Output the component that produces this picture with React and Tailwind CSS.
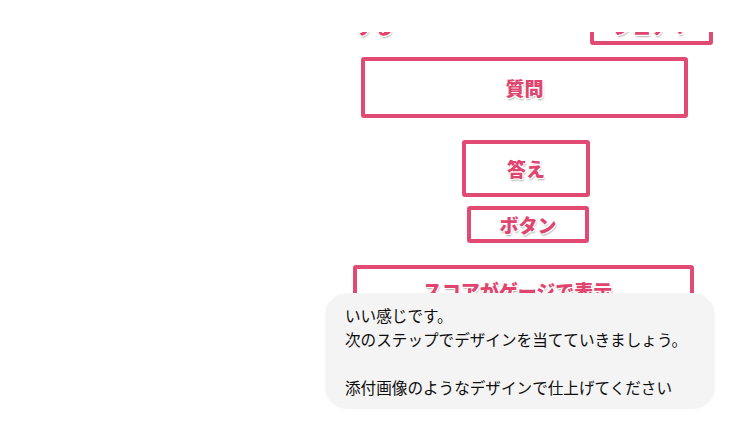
import React from 'react'

const pinkBox = 'border-[4px] border-[#e14b73] rounded-[3px] flex items-center justify-center'
const label =
  'font-black text-[19px] leading-none text-[#e0456f] [text-shadow:-1px_-1px_0_#fff,1px_-1px_0_#fff,-1px_1px_0_#fff,1px_1px_0_#fff,1px_2px_2px_rgba(0,0,0,0.35)]'

function Wireframe() {
  return (
    <div className="w-[375px] h-[261px] overflow-hidden bg-white">
      {/* shifted up so the top of the sketch is cut like the scrolled view */}
      <div className="-mt-8 flex flex-col items-start">
        <div className="mt-[5px] w-full flex items-center justify-between">
          <span className={`${label} ml-[15px]`}>する</span>
          <div className={`${pinkBox} w-[123px] h-[40px] mr-[2px]`}>
            <span className={label}>シェア！</span>
          </div>
        </div>
        <div className={`${pinkBox} mt-[12px] ml-[21px] w-[327px] h-[61px]`}>
          <span className={label}>質問</span>
        </div>
        <div className={`${pinkBox} mt-[22px] ml-[122px] w-[128px] h-[57px]`}>
          <span className={label}>答え</span>
        </div>
        <div className={`${pinkBox} mt-[9px] ml-[127px] w-[122px] h-[37px]`}>
          <span className={label}>ボタン</span>
        </div>
        <div className={`${pinkBox} mt-[22px] ml-[13px] w-[341px] h-[70px] items-start pt-[12px]`}>
          <span className={`${label} -ml-[12px]`}>スコアがゲージで表示</span>
        </div>
      </div>
    </div>
  )
}

export default function App() {
  return (
    <div className="w-[744px] h-[440px] bg-white overflow-hidden font-['Noto_Sans_CJK_JP',sans-serif]">
      <div className="pt-8 pr-[29px] flex flex-col items-end">
        <Wireframe />
        <div className="relative w-[390px] rounded-[22px] bg-[#f4f4f4] pl-5 pr-3 py-2.5 text-[15.6px] leading-[24px] text-[#0d0d0d] whitespace-pre-wrap">
          {'いい感じです。\n次のステップでデザインを当てていきましょう。\n\n添付画像のようなデザインで仕上げてください'}
        </div>
      </div>
    </div>
  )
}
